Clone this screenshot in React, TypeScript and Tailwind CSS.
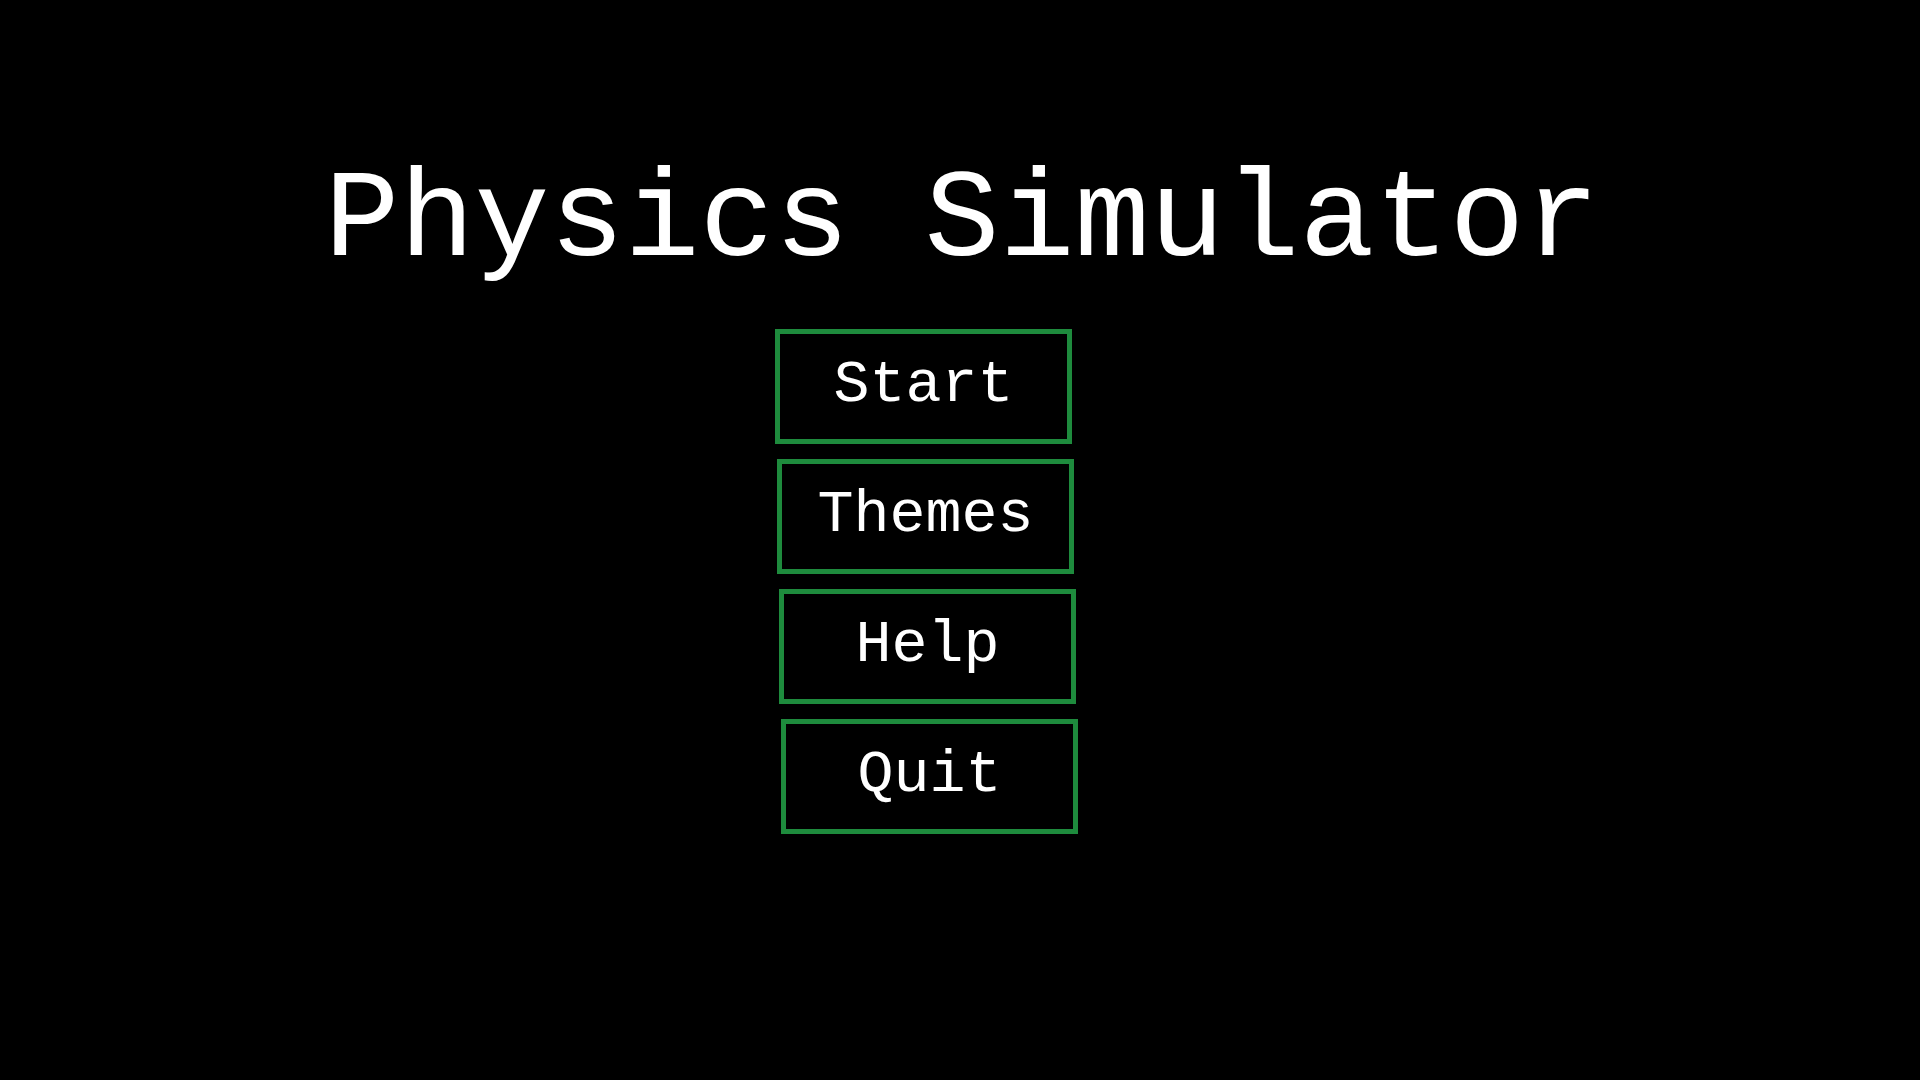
const BUTTONS = [
  { label: "Start", offset: "ml-[0px]" },
  { label: "Themes", offset: "ml-[2px]" },
  { label: "Help", offset: "ml-[4px]" },
  { label: "Quit", offset: "ml-[6px]" },
];

export default function App() {
  return (
    <div
      className="w-[1920px] h-[1080px] bg-black text-white flex flex-col items-center overflow-hidden"
      style={{ fontFamily: '"Liberation Mono", "Courier New", monospace' }}
    >
      <h1 className="mt-[160px] ml-[4px] text-[125px] leading-[125px] tracking-normal font-normal whitespace-pre">
        Physics Simulator
      </h1>
      <div className="mt-[44px] mr-[67px] w-[303px] flex flex-col gap-[15px] items-start">
        {BUTTONS.map((b) => (
          <button
            key={b.label}
            type="button"
            className={`${b.offset} w-[297px] h-[115px] border-[5px] border-[#1e8b3d] bg-black text-white text-[60px] leading-none flex items-center justify-center pb-[4px]`}
          >
            {b.label}
          </button>
        ))}
      </div>
    </div>
  );
}
